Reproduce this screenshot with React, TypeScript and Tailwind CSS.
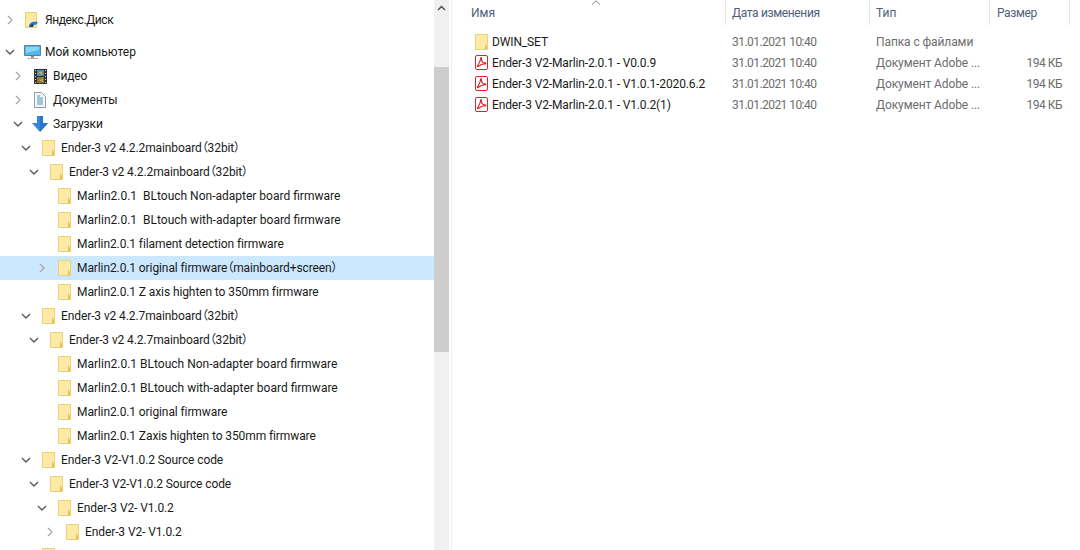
const font = 'font-["Roboto","Noto_Sans_CJK_SC",sans-serif]';

type TreeRow = {
  label: string;
  depth: number;
  arrow?: 'open' | 'closed';
  icon?: 'folder' | 'disk' | 'pc' | 'video' | 'docs' | 'down';
  selected?: boolean;
  wide?: boolean;
};

const treeRows: TreeRow[] = [
  { label: 'Мой компьютер', depth: 0, arrow: 'open', icon: 'pc', wide: true },
  { label: 'Видео', depth: 1, arrow: 'closed', icon: 'video' },
  { label: 'Документы', depth: 1, arrow: 'closed', icon: 'docs' },
  { label: 'Загрузки', depth: 1, arrow: 'open', icon: 'down' },
  { label: 'Ender-3 v2 4.2.2mainboard（32bit）', depth: 2, arrow: 'open' },
  { label: 'Ender-3 v2 4.2.2mainboard（32bit）', depth: 3, arrow: 'open' },
  { label: 'Marlin2.0.1  BLtouch Non-adapter board firmware', depth: 4, wide: true },
  { label: 'Marlin2.0.1  BLtouch with-adapter board firmware', depth: 4, wide: true },
  { label: 'Marlin2.0.1 filament detection firmware', depth: 4 },
  { label: 'Marlin2.0.1 original firmware（mainboard+screen）', depth: 4, arrow: 'closed', selected: true },
  { label: 'Marlin2.0.1 Z axis highten to 350mm firmware', depth: 4 },
  { label: 'Ender-3 v2 4.2.7mainboard（32bit）', depth: 2, arrow: 'open' },
  { label: 'Ender-3 v2 4.2.7mainboard（32bit）', depth: 3, arrow: 'open' },
  { label: 'Marlin2.0.1 BLtouch Non-adapter board firmware', depth: 4, wide: true },
  { label: 'Marlin2.0.1 BLtouch with-adapter board firmware', depth: 4, wide: true },
  { label: 'Marlin2.0.1 original firmware', depth: 4 },
  { label: 'Marlin2.0.1 Zaxis highten to 350mm firmware', depth: 4 },
  { label: 'Ender-3 V2-V1.0.2 Source code', depth: 2, arrow: 'open' },
  { label: 'Ender-3 V2-V1.0.2 Source code', depth: 3, arrow: 'open' },
  { label: 'Ender-3 V2- V1.0.2', depth: 4, arrow: 'open' },
  { label: 'Ender-3 V2- V1.0.2', depth: 5, arrow: 'closed' },
  { label: '', depth: 2 },
];

const files = [
  { name: 'DWIN_SET', type: 'Папка с файлами', size: '', pdf: false },
  { name: 'Ender-3 V2-Marlin-2.0.1 - V0.0.9', type: 'Документ Adobe ...', size: '194 КБ', pdf: true },
  { name: 'Ender-3 V2-Marlin-2.0.1 - V1.0.1-2020.6.2', type: 'Документ Adobe ...', size: '194 КБ', pdf: true },
  { name: 'Ender-3 V2-Marlin-2.0.1 - V1.0.2(1)', type: 'Документ Adobe ...', size: '194 КБ', pdf: true },
];

function Chevron({ open }: { open: boolean }) {
  return (
    <svg width="10" height="10" viewBox="0 0 10 10" fill="none" stroke={open ? '#555' : '#a6a6a6'} strokeWidth="1.3">
      {open ? <path d="M1 3l4 4 4-4" /> : <path d="M3 1l4 4-4 4" />}
    </svg>
  );
}

function Folder() {
  return (
    <svg width="13" height="16" viewBox="0 0 13 16">
      <path d="M.5.5h12v15H.5z" fill="#fdeaa4" stroke="#eccf76" />
      <path d="M9.500 15l2.500-4v4z" fill="#e9c25a" />
      <path d="M10.500 10v5" stroke="#e9c25a" />
    </svg>
  );
}

function TreeIcon({ icon }: { icon: TreeRow['icon'] }) {
  if (icon === 'disk') {
    return (
      <svg width="14" height="16" viewBox="0 0 14 16">
        <path d="M.5.5h11v15H.5z" fill="#fde9a2" stroke="#ecd078" />
        <path d="M4 15c0-4 3-6 9-5-1 2-2 3-4 3l-1 2z" fill="#1f78c8" />
        <path d="M5 15c0-1.500 1-3 3-3v3z" fill="#12476f" />
      </svg>
    );
  }
  if (icon === 'pc') {
    return (
      <svg width="17" height="15" viewBox="0 0 17 15">
        <path d="M.5.500h16v10H.5z" fill="#4fb7ec" stroke="#5d7f98" />
        <path d="M2 2h13v3L2 8z" fill="#8ad6f6" />
        <path d="M7 11h3v2H7z" fill="#8a9aa6" />
        <path d="M3 13.500h11" stroke="#a9b4bc" />
      </svg>
    );
  }
  if (icon === 'video') {
    return (
      <svg width="13" height="15" viewBox="0 0 13 15">
        <path d="M0 0h13v15H0z" fill="#2b3236" />
        <path d="M3 1h7v6H3z" fill="#4f8fb8" />
        <path d="M3 8h7v6H3z" fill="#8f7a3c" />
        <path d="M4 4l4-2v4zM5 11l4-1v3z" fill="#d8a23c" />
        <path d="M1 1h1v1H1zM1 4h1v1H1zM1 7h1v1H1zM1 10h1v1H1zM1 13h1v1H1zM11 1h1v1h-1zM11 4h1v1h-1zM11 7h1v1h-1zM11 10h1v1h-1zM11 13h1v1h-1z" fill="#d8dde0" />
      </svg>
    );
  }
  if (icon === 'docs') {
    return (
      <svg width="12" height="16" viewBox="0 0 12 16">
        <path d="M.5.500h7l4 4v11H.5z" fill="#f7f9fb" stroke="#8f9ba6" />
        <path d="M3 4h3M3 6h6M3 8h6M3 10h6M3 12h6" stroke="#4f8fc0" />
      </svg>
    );
  }
  if (icon === 'down') {
    return (
      <svg width="16" height="16" viewBox="0 0 16 16">
        <path d="M5 0h6v7h5l-8 9-8-9h5z" fill="#3487de" />
        <path d="M8 0h3v7h5l-8 9z" fill="#2a75c8" />
      </svg>
    );
  }
  return <Folder />;
}

function TreeLine({ row }: { row: TreeRow }) {
  return (
    <div
      className={`flex h-6 shrink-0 items-center ${row.selected ? 'bg-[#cce8ff]' : ''}`}
      style={{ paddingLeft: row.depth * 8 }}
    >
      <span className="flex w-5 shrink-0 justify-center">
        {row.arrow && <Chevron open={row.arrow === 'open'} />}
      </span>
      <span className="flex w-6 shrink-0 justify-center">
        <TreeIcon icon={row.icon} />
      </span>
      <span
        className={`ml-px whitespace-pre text-[12px] text-[#1a1a1a] [font-feature-settings:"palt"] ${
          row.wide ? '' : 'tracking-[-0.1px]'
        }`}
      >
        {row.label}
      </span>
    </div>
  );
}

function PdfIcon() {
  return (
    <svg width="13" height="15" viewBox="0 0 13 15" fill="none">
      <rect x=".5" y=".5" width="12" height="14" rx="1.500" fill="#fff" stroke="#d8232a" />
      <path d="M5.800 3.200c-.4 2.500-1.300 5-3.300 7.600-.5 1 .6 1.200 1.400.2 1.500-1.500 3.500-2.200 6-2 1.200 0 1.200-1.100 0-1.100-2 0-3.500-2-3.500-4.700 0-.8-.5-.8-.6 0z" stroke="#d8232a" strokeWidth="1.100" />
    </svg>
  );
}

export default function App() {
  return (
    <div className={`flex h-[550px] w-[1080px] overflow-hidden bg-white ${font}`}>
      {/* дерево папок */}
      <div className="flex w-[434px] shrink-0 flex-col overflow-hidden pt-2">
        <div className="flex h-6 shrink-0 items-center">
          <span className="flex w-5 shrink-0 justify-center">
            <Chevron open={false} />
          </span>
          <span className="flex w-6 shrink-0 justify-center">
            <TreeIcon icon="disk" />
          </span>
          <span className="ml-px text-[12px] tracking-[-0.4px] text-[#1a1a1a]">Яндекс.Диск</span>
        </div>
        <div className="h-2 shrink-0" />
        {treeRows.map((row, i) => (
          <TreeLine key={i} row={row} />
        ))}
      </div>

      {/* полоса прокрутки */}
      <div className="flex w-[15px] shrink-0 flex-col bg-[#f0f0f0]">
        <div className="flex h-[15px] shrink-0 items-center justify-center">
          <svg width="9" height="6" viewBox="0 0 9 6" fill="none" stroke="#505050" strokeWidth="1.500">
            <path d="M1 5l3.500-3.500L8 5" />
          </svg>
        </div>
        <div className="mt-[52px] h-[285px] bg-[#cdcdcd]" />
      </div>
      <div className="ml-[2px] w-px shrink-0 bg-[#efefef]" />

      {/* список файлов */}
      <div className="flex min-w-0 flex-1 flex-col">
        <div className="relative grid h-[25px] grid-cols-[274px_144px_120px_80px] text-[12px] text-[#4c607a]">
          <div className="h-[25px] border-r border-[#e5e5e5] pl-[19px] pt-[4px]">Имя</div>
          <div className="h-[25px] border-r border-[#e5e5e5] pl-[6px] pt-[4px] tracking-[-0.35px]">Дата изменения</div>
          <div className="h-[25px] border-r border-[#e5e5e5] pl-[6px] pt-[4px]">Тип</div>
          <div className="h-[25px] border-r border-[#e5e5e5] pl-[7px] pt-[4px] tracking-[-0.4px]">Размер</div>
          <svg className="absolute left-[139px] top-0" width="10" height="5" viewBox="0 0 10 5" fill="none" stroke="#8a8a8a">
            <path d="M1 4.500L5 .8l4 3.700" />
          </svg>
        </div>
        <div className="mt-[6px] flex flex-col">
          {files.map(file => (
            <div key={file.name} className="grid h-[21px] grid-cols-[274px_144px_120px_72px] items-center text-[12px]">
              <div className="flex items-center pl-[23px] text-[#1a1a1a]">
                <span className="flex w-[17px] shrink-0">{file.pdf ? <PdfIcon /> : <Folder />}</span>
                <span className="whitespace-nowrap tracking-[-0.13px]">{file.name}</span>
              </div>
              <div className="pl-[6px] tracking-[-0.55px] text-[#6d6d6d]">31.01.2021 10:40</div>
              <div className="pl-[6px] tracking-[-0.1px] text-[#6d6d6d]">{file.type}</div>
              <div className="text-right tracking-[-0.5px] text-[#6d6d6d]">{file.size}</div>
            </div>
          ))}
        </div>
      </div>
    </div>
  );
}
